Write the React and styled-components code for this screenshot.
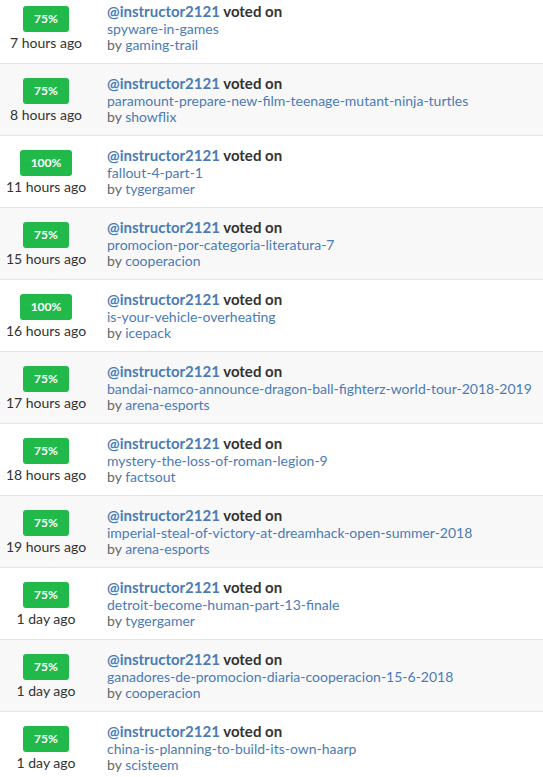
import styled, { createGlobalStyle } from 'styled-components';

const GlobalStyle = createGlobalStyle`
  body {
    margin: 0;
    background: #fff;
    font-family: Lato, "Open Sans", sans-serif;
  }
`;

const List = styled.div`
  margin-top: -8px;
`;

const Row = styled.div`
  display: flex;
  height: 72px;
  box-sizing: border-box;
  border-bottom: 1px solid #e4e4e4;
  background: ${(p) => (p.$alt ? '#f8f8f8' : '#fff')};
`;

const Side = styled.div`
  width: 92px;
  flex-shrink: 0;
  display: flex;
  flex-direction: column;
  align-items: center;
  padding-top: 14px;
`;

const Badge = styled.span`
  display: inline-block;
  height: 26px;
  line-height: 26px;
  padding: 0 11px;
  border-radius: 3px;
  background: #22b94b;
  color: #fff;
  font-size: 12px;
  font-weight: 700;
`;

const Time = styled.div`
  margin-top: 2px;
  font-size: 14px;
  line-height: 17px;
  color: #333;
  white-space: nowrap;
`;

const Body = styled.div`
  padding: 10px 0 0 15px;
  min-width: 0;
`;

const Heading = styled.div`
  font-size: 15px;
  line-height: 19px;
  font-weight: 700;
  color: #333;
  white-space: nowrap;
`;

const Link = styled.a`
  color: #4a7bb7;
  text-decoration: none;
`;

const Line = styled.div`
  font-size: 14px;
  line-height: 16px;
  color: #666;
  white-space: nowrap;
`;

const votes = [
  ['75%', '7 hours ago', 'spyware-in-games', 'gaming-trail'],
  ['75%', '8 hours ago', 'paramount-prepare-new-film-teenage-mutant-ninja-turtles', 'showflix'],
  ['100%', '11 hours ago', 'fallout-4-part-1', 'tygergamer'],
  ['75%', '15 hours ago', 'promocion-por-categoria-literatura-7', 'cooperacion'],
  ['100%', '16 hours ago', 'is-your-vehicle-overheating', 'icepack'],
  ['75%', '17 hours ago', 'bandai-namco-announce-dragon-ball-fighterz-world-tour-2018-2019', 'arena-esports'],
  ['75%', '18 hours ago', 'mystery-the-loss-of-roman-legion-9', 'factsout'],
  ['75%', '19 hours ago', 'imperial-steal-of-victory-at-dreamhack-open-summer-2018', 'arena-esports'],
  ['75%', '1 day ago', 'detroit-become-human-part-13-finale', 'tygergamer'],
  ['75%', '1 day ago', 'ganadores-de-promocion-diaria-cooperacion-15-6-2018', 'cooperacion'],
  ['75%', '1 day ago', 'china-is-planning-to-build-its-own-haarp', 'scisteem'],
];

export default function App() {
  return (
    <>
      <GlobalStyle />
      <List>
        {votes.map(([pct, time, post, author], i) => (
          <Row key={i} $alt={i % 2 === 1}>
            <Side>
              <Badge>{pct}</Badge>
              <Time>{time}</Time>
            </Side>
            <Body>
              <Heading>
                <Link href="#">@instructor2121</Link> voted on
              </Heading>
              <Line>
                <Link href="#">{post}</Link>
              </Line>
              <Line>
                by <Link href="#">{author}</Link>
              </Line>
            </Body>
          </Row>
        ))}
      </List>
    </>
  );
}
